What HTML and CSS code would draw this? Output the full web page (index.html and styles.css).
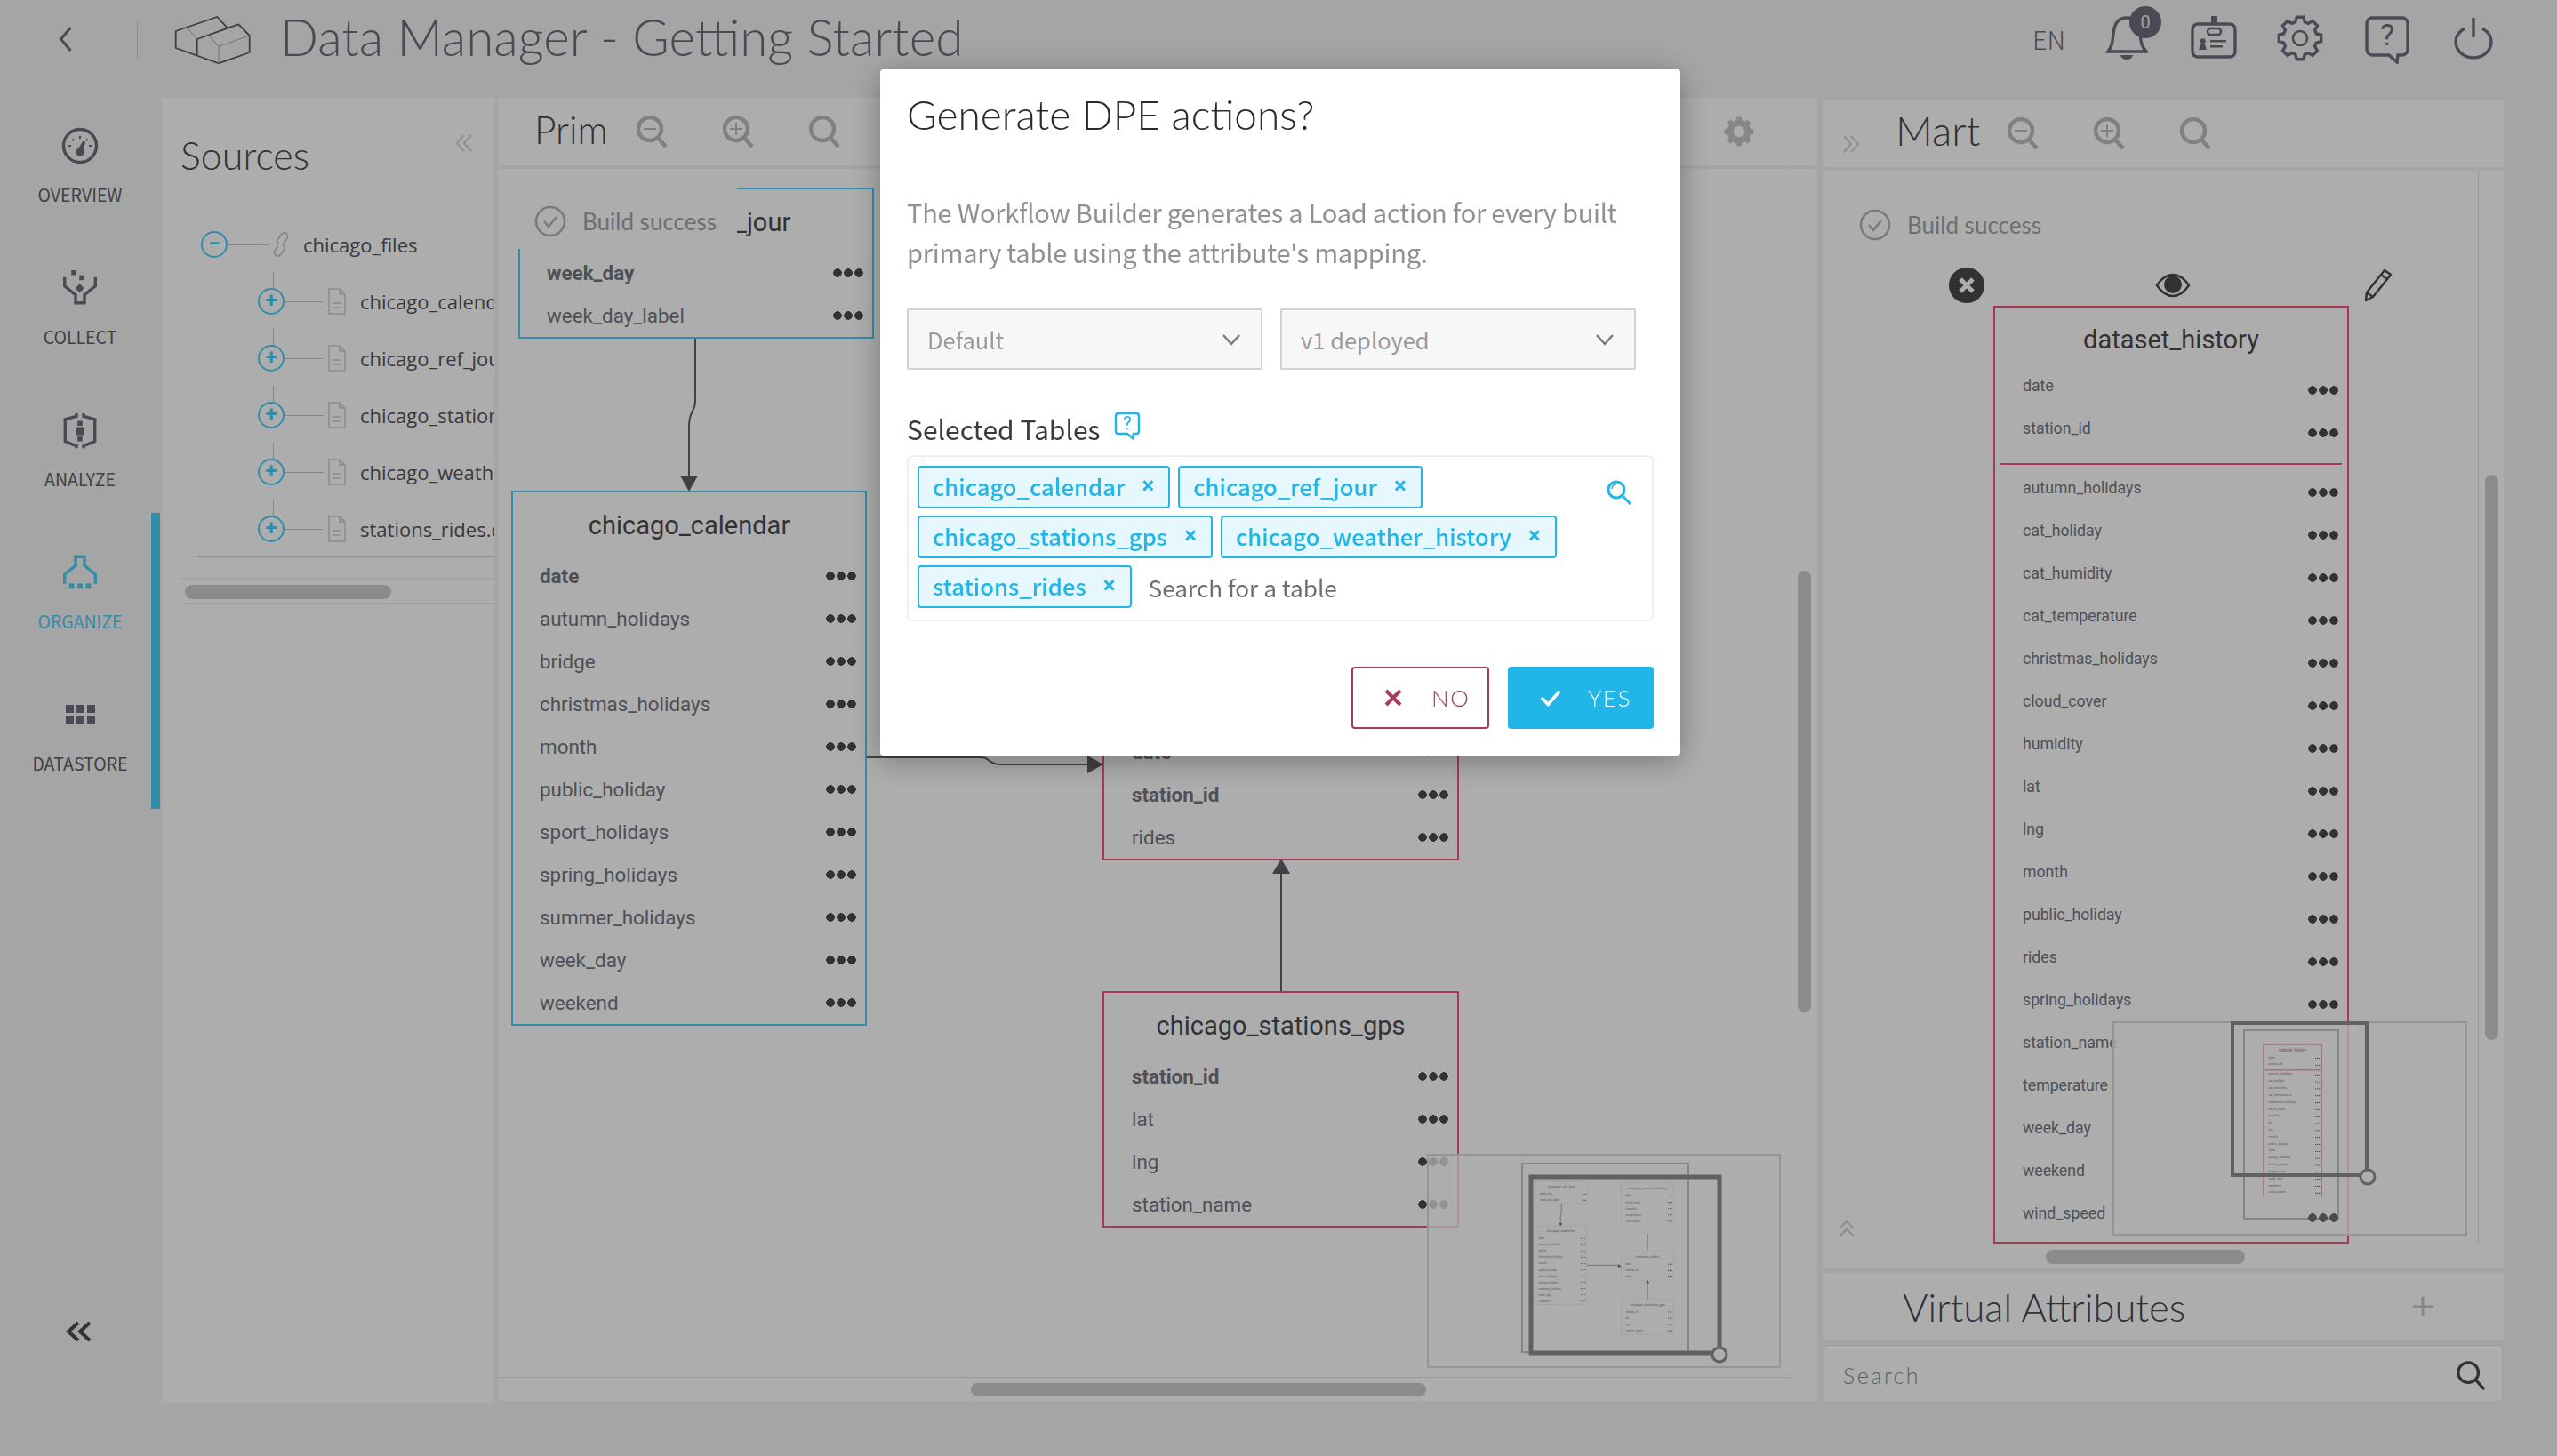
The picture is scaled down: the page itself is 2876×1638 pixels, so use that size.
FILE: index.html
```html
<!DOCTYPE html>
<html lang="en">
<head>
<meta charset="utf-8">
<title>Data Manager - Getting Started</title>
<link rel="stylesheet" href="styles.css">
</head>
<body>
<svg class="defs" width="0" height="0" aria-hidden="true">
  <defs>
    <symbol id="i-gear" viewBox="0 0 52 52"><polygon transform="translate(26 26)" points="18.26,-5.24 23.7,-3.75 23.7,3.75 18.26,5.24 16.62,9.21 19.42,14.11 14.11,19.42 9.21,16.62 5.24,18.26 3.75,23.7 -3.75,23.7 -5.24,18.26 -9.21,16.62 -14.11,19.42 -19.42,14.11 -16.62,9.21 -18.26,5.24 -23.7,3.75 -23.7,-3.75 -18.26,-5.24 -16.62,-9.21 -19.42,-14.11 -14.11,-19.42 -9.21,-16.62 -5.24,-18.26 -3.75,-23.7 3.75,-23.7 5.24,-18.26 9.21,-16.62 14.11,-19.42 19.42,-14.11 16.62,-9.21"/></symbol>
    <symbol id="i-zoom" viewBox="0 0 36 36"><circle cx="15" cy="15" r="13"/><path d="M24 25l9 10"/></symbol>
    <symbol id="i-zoom-out" viewBox="0 0 36 36"><circle cx="15" cy="15" r="13"/><path d="M24 25l9 10"/><path class="thin" d="M8 15h14"/></symbol>
    <symbol id="i-zoom-in" viewBox="0 0 36 36"><circle cx="15" cy="15" r="13"/><path d="M24 25l9 10"/><path class="thin" d="M8 15h14M15 8v14"/></symbol>
    <symbol id="i-check" viewBox="0 0 36 36"><circle cx="18" cy="18" r="16"/><path d="M11 18l5 6 9-11"/></symbol>
    <symbol id="i-file" viewBox="0 0 20 30"><path d="M1 1h12l6 6v22H1zM13 1v6h6M5 17h10M5 22h10"/></symbol>
    <symbol id="m-dots" viewBox="0 0 34 10"><circle cx="5" cy="5" r="4"/><circle cx="17" cy="5" r="4"/><circle cx="29" cy="5" r="4"/></symbol>
  </defs>
</svg>

<div class="app">
  <header class="topbar">
    <svg class="back" viewBox="0 0 16 30"><path d="M14 2L3 15l11 13"/></svg>
    <span class="sep"></span>
    <svg class="logo" viewBox="0 -1 86 54"><path class="logo-thick" d="M1.7 16L48.3 0 60 12.7 72.3 8.3 84.7 21V40L50 52.3 1.7 35zM25.7 43.3V25L60 12.7"/><path class="logo-thin" d="M15 12.7L25.7 25M39 20.7L50 33.3 84.7 21M50 33.3V52.3"/></svg>
    <h1 class="app-title">Data Manager - Getting Started</h1>
    <div class="top-tools">
      <span class="lang">EN</span>
      <span class="bell-wrap">
        <svg class="tool tool-bell" viewBox="0 0 48 50"><path d="M3 40C8 34 8 28 9 20 10 8 15 2 24 2 33 2 38 8 39 20 40 28 40 34 46 40Z"/><path class="solid" d="M17 44h14c-1 4-4 5-7 5s-6-1-7-5z"/></svg>
        <span class="badge">0</span>
      </span>
      <svg class="tool tool-id" viewBox="0 0 52 50"><rect x="2" y="9" width="48" height="37" rx="6"/><rect class="solid" x="23" y="0" width="7" height="10"/><rect class="ring" x="19" y="14" width="15" height="7" rx="3.3"/><circle class="solid" cx="13.7" cy="28.3" r="3"/><path class="solid" d="M9 38l2-6h5l2 6z"/><path class="thin" d="M22 28.3h18M22 34.3h14"/></svg>
      <svg class="tool tool-gear" viewBox="0 0 52 52"><use href="#i-gear"/><circle class="ring" cx="26" cy="26" r="8"/></svg>
      <svg class="tool tool-help" viewBox="0 0 50 54"><path d="M8 2h34c3 0 6 3 6 6v30c0 3-3 6-6 6h-5l-1 8-9-8H8c-3 0-6-3-6-6V8c0-3 3-6 6-6z"/><text class="help-q" x="25" y="33">?</text></svg>
      <svg class="tool tool-power" viewBox="0 0 44 48"><path d="M22 1v22"/><path d="M12 13C5 17 2 23 2 28c0 10 9 18 20 18s20-8 20-18c0-5-3-11-10-15"/></svg>
    </div>
  </header>

  <div class="work">
    <nav class="side-nav">
      <a class="nav-item">
        <svg class="nav-icon" viewBox="0 0 44 44"><circle cx="22" cy="22" r="18.5"/><path class="thin" d="M22 11v3M13.5 14.5l1.7 1.7M30.5 14.5l-1.7 1.7M9 22h3M32 22h3"/><circle class="solid" cx="22" cy="29" r="4.6"/><path class="solid" d="M18.5 27.5L25.5 16.5 28 18 25.5 29z"/></svg>
        <span class="nav-label">OVERVIEW</span>
      </a>
      <a class="nav-item">
        <svg class="nav-icon" viewBox="0 0 44 44"><path d="M4.7 9.7v10L17 29.7v9h10v-9l12.3-10v-10"/><rect class="solid" x="12.2" y="2" width="5.5" height="5.5"/><rect class="solid" x="21.2" y="7.6" width="5.5" height="5.5"/><path class="solid" d="M21.7 17.3l5 5-5 5-5-5z"/></svg>
        <span class="nav-label">COLLECT</span>
      </a>
      <a class="nav-item">
        <svg class="nav-icon" viewBox="0 0 44 44"><path d="M18 3v3.5L5.3 9.7v25L18 39.7v2.6M26 3v3.5l12.7 3.2v25L26 39.7v2.6"/><rect class="solid" x="19.2" y="11.5" width="5.6" height="5.6"/><rect class="solid" x="17.5" y="18.5" width="9" height="9"/><rect class="solid" x="19.2" y="28.9" width="5.6" height="5.6"/></svg>
        <span class="nav-label">ANALYZE</span>
      </a>
      <div class="nav-group">
        <a class="nav-item is-active">
          <svg class="nav-icon" viewBox="0 0 44 44"><path d="M4.7 34.7V24.3L17 14.3V4.3H27V14.3L39.3 24.3V34.7"/><rect class="solid" x="9.8" y="34.4" width="5.8" height="5.8"/><rect class="solid" x="19.1" y="34.4" width="5.8" height="5.8"/><rect class="solid" x="28.4" y="34.4" width="5.8" height="5.8"/></svg>
          <span class="nav-label">ORGANIZE</span>
        </a>
        <a class="nav-item nav-last">
          <svg class="nav-icon" viewBox="0 0 44 44"><g class="solid"><rect x="6" y="11" width="9" height="9"/><rect x="18" y="11" width="9" height="9"/><rect x="30" y="11" width="9" height="9"/><rect x="6" y="23" width="9" height="9"/><rect x="18" y="23" width="9" height="9"/><rect x="30" y="23" width="9" height="9"/></g></svg>
          <span class="nav-label">DATASTORE</span>
        </a>
      </div>
      <svg class="nav-collapse" viewBox="0 0 30 24"><path d="M14 2L3 12l11 10M27 2L16 12l11 10"/></svg>
    </nav>

    <section class="panel sources">
      <div class="sources-head">
        <h2 class="panel-title">Sources</h2>
        <svg class="chev-faint" viewBox="0 0 20 22"><path d="M10 2L2 11l8 9M18 2l-8 9 8 9"/></svg>
      </div>
      <ul class="tree">
        <li class="tree-row tree-root">
          <span class="toggle">&#8722;</span><span class="stem stem-root"></span>
          <svg class="link-icon" viewBox="0 0 24 30"><path d="M9 17l-4 5a4 4 0 0 0 6 5l5-7a4 4 0 0 0-2-5M15 13l4-5a4 4 0 0 0-6-5L8 10a4 4 0 0 0 2 5"/></svg>
          <span class="tree-name">chicago_files</span>
        </li>
        <li class="tree-row tree-child"><span class="toggle">+</span><span class="stem"></span><svg class="file-icon"><use href="#i-file"/></svg><span class="tree-name">chicago_calendar.csv</span></li>
        <li class="tree-row tree-child"><span class="toggle">+</span><span class="stem"></span><svg class="file-icon"><use href="#i-file"/></svg><span class="tree-name">chicago_ref_jour.csv</span></li>
        <li class="tree-row tree-child"><span class="toggle">+</span><span class="stem"></span><svg class="file-icon"><use href="#i-file"/></svg><span class="tree-name">chicago_stations_gps.csv</span></li>
        <li class="tree-row tree-child"><span class="toggle">+</span><span class="stem"></span><svg class="file-icon"><use href="#i-file"/></svg><span class="tree-name">chicago_weather.csv</span></li>
        <li class="tree-row tree-child"><span class="toggle">+</span><span class="stem"></span><svg class="file-icon"><use href="#i-file"/></svg><span class="tree-name">stations_rides.csv</span></li>
      </ul>
      <div class="h-track"><span class="h-thumb"></span></div>
    </section>

    <section class="prim">
      <div class="panel pane-head prim-head">
        <h2 class="panel-title">Prim</h2>
        <div class="zoom-tools">
          <svg class="zoom-icon"><use href="#i-zoom-out"/></svg>
          <svg class="zoom-icon"><use href="#i-zoom-in"/></svg>
          <svg class="zoom-icon"><use href="#i-zoom"/></svg>
        </div>
        <svg class="prim-gear" viewBox="0 0 52 52"><use href="#i-gear"/><circle cx="26" cy="26" r="9"/></svg>
      </div>
      <div class="panel canvas prim-canvas">
        <svg class="links" viewBox="0 0 1484 1386">
          <path d="M222 190V261C222 275 215 270 215 290V345"/>
          <path d="M415 662H545C552 662 552 670 565 670H665"/>
          <path d="M881 925V793"/>
          <polygon points="215,363 205,345 225,345"/>
          <polygon points="681,670 663,660 663,680"/>
          <polygon points="881,776 871,793 891,793"/>
        </svg>

        <article class="tbl blue tbl-ref">
          <h3 class="tbl-title">chicago_ref_jour</h3>
          <div class="row key"><span>week_day</span><i class="dots"></i></div>
          <div class="row"><span>week_day_label</span><i class="dots"></i></div>
        </article>
        <div class="status status-ref">
          <svg class="status-icon"><use href="#i-check"/></svg><span>Build success</span>
        </div>

        <article class="tbl blue tbl-cal">
          <h3 class="tbl-title">chicago_calendar</h3>
          <div class="row key"><span>date</span><i class="dots"></i></div>
          <div class="row"><span>autumn_holidays</span><i class="dots"></i></div>
          <div class="row"><span>bridge</span><i class="dots"></i></div>
          <div class="row"><span>christmas_holidays</span><i class="dots"></i></div>
          <div class="row"><span>month</span><i class="dots"></i></div>
          <div class="row"><span>public_holiday</span><i class="dots"></i></div>
          <div class="row"><span>sport_holidays</span><i class="dots"></i></div>
          <div class="row"><span>spring_holidays</span><i class="dots"></i></div>
          <div class="row"><span>summer_holidays</span><i class="dots"></i></div>
          <div class="row"><span>week_day</span><i class="dots"></i></div>
          <div class="row"><span>weekend</span><i class="dots"></i></div>
        </article>

        <article class="tbl red tbl-rides">
          <h3 class="tbl-title">stations_rides</h3>
          <div class="row key"><span>date</span><i class="dots"></i></div>
          <div class="row key"><span>station_id</span><i class="dots"></i></div>
          <div class="row"><span>rides</span><i class="dots"></i></div>
        </article>

        <article class="tbl red tbl-gps">
          <h3 class="tbl-title">chicago_stations_gps</h3>
          <div class="row key"><span>station_id</span><i class="dots"></i></div>
          <div class="row"><span>lat</span><i class="dots"></i></div>
          <div class="row"><span>lng</span><i class="dots"></i></div>
          <div class="row"><span>station_name</span><i class="dots"></i></div>
        </article>

        <div class="minimap mini-prim">
          <svg viewBox="0 0 398 241" width="398" height="241">
            <rect class="mm-page" x="107" y="11" width="187" height="212"/>
            <g transform="translate(122 31) scale(.147) translate(-583 -211)">
              <g class="mm-blue"><rect x="583" y="211" width="400" height="170"/><rect x="575" y="552" width="400" height="601"/></g>
              <g class="mm-red"><path d="M1240 530V224H1641V530"/><rect x="1240" y="749" width="401" height="218"/><rect x="1240" y="1115" width="401" height="266"/></g>
              <path class="mm-link" d="M782 380V451L775 473V535M975 853H1223M1441 1115V983M1441 610V735"/>
              <path class="mm-arrow" d="M775 553L760 530H790zM1241 860L1215 845V875zM1441 966L1426 990H1456z"/>
              <g class="mm-text">
                <text x="783" y="258" class="c">chicago_ref_jour</text><text x="615" y="315">week_day</text><text x="615" y="362">week_day_label</text>
                <text x="775" y="600" class="c">chicago_calendar</text><text x="607" y="655">date</text><text x="607" y="703">autumn_holidays</text><text x="607" y="751">bridge</text><text x="607" y="799">christmas_holidays</text><text x="607" y="847">month</text><text x="607" y="895">public_holiday</text><text x="607" y="943">sport_holidays</text><text x="607" y="991">spring_holidays</text><text x="607" y="1039">summer_holidays</text><text x="607" y="1087">week_day</text><text x="607" y="1135">weekend</text>
                <text x="1441" y="272" class="c">chicago_weather_history</text><text x="1273" y="330">date</text><text x="1273" y="378">cloud_cover</text><text x="1273" y="426">humidity</text><text x="1273" y="474">temperature</text><text x="1273" y="522">wind_speed</text>
                <text x="1441" y="798" class="c">stations_rides</text><text x="1273" y="853">date</text><text x="1273" y="901">station_id</text><text x="1273" y="949">rides</text>
                <text x="1441" y="1163" class="c">chicago_stations_gps</text><text x="1273" y="1218">station_id</text><text x="1273" y="1266">lat</text><text x="1273" y="1314">lng</text><text x="1273" y="1362">station_name</text>
              </g>
              <g class="mm-dots">
                <use href="#m-dots" x="939" y="303" width="34" height="10"/><use href="#m-dots" x="939" y="350" width="34" height="10"/>
                <use href="#m-dots" x="930" y="643" width="34" height="10"/><use href="#m-dots" x="930" y="691" width="34" height="10"/><use href="#m-dots" x="930" y="739" width="34" height="10"/><use href="#m-dots" x="930" y="787" width="34" height="10"/><use href="#m-dots" x="930" y="835" width="34" height="10"/><use href="#m-dots" x="930" y="883" width="34" height="10"/><use href="#m-dots" x="930" y="931" width="34" height="10"/><use href="#m-dots" x="930" y="979" width="34" height="10"/><use href="#m-dots" x="930" y="1027" width="34" height="10"/><use href="#m-dots" x="930" y="1075" width="34" height="10"/><use href="#m-dots" x="930" y="1123" width="34" height="10"/>
                <use href="#m-dots" x="1596" y="319" width="34" height="10"/><use href="#m-dots" x="1596" y="367" width="34" height="10"/><use href="#m-dots" x="1596" y="415" width="34" height="10"/><use href="#m-dots" x="1596" y="463" width="34" height="10"/><use href="#m-dots" x="1596" y="511" width="34" height="10"/>
                <use href="#m-dots" x="1596" y="840" width="34" height="10"/><use href="#m-dots" x="1596" y="889" width="34" height="10"/><use href="#m-dots" x="1596" y="937" width="34" height="10"/>
                <use href="#m-dots" x="1596" y="1206" width="34" height="10"/><use href="#m-dots" x="1596" y="1254" width="34" height="10"/><use href="#m-dots" x="1596" y="1302" width="34" height="10"/><use href="#m-dots" x="1596" y="1350" width="34" height="10"/>
              </g>
            </g>
            <rect class="mm-view" x="117" y="26" width="212" height="198"/>
            <circle class="mm-handle" cx="329" cy="226" r="8"/>
          </svg>
        </div>

        <span class="v-rail prim-rail"></span>
        <span class="v-thumb prim-vthumb"></span>
        <span class="b-rail prim-brail"></span>
        <span class="b-thumb prim-bthumb"></span>
      </div>
    </section>

    <section class="mart">
      <div class="panel pane-head mart-head">
        <svg class="chev-faint chev-right" viewBox="0 0 20 22"><path d="M2 2l8 9-8 9M10 2l8 9-8 9"/></svg>
        <h2 class="panel-title">Mart</h2>
        <div class="zoom-tools">
          <svg class="zoom-icon"><use href="#i-zoom-out"/></svg>
          <svg class="zoom-icon"><use href="#i-zoom-in"/></svg>
          <svg class="zoom-icon"><use href="#i-zoom"/></svg>
        </div>
      </div>
      <div class="panel canvas mart-canvas">
        <div class="status status-mart">
          <svg class="status-icon"><use href="#i-check"/></svg><span>Build success</span>
        </div>
        <div class="tbl-tools">
          <svg class="tt-close" viewBox="0 0 40 40"><circle cx="20" cy="20" r="20"/><path d="M13 13l14 14M27 13L13 27"/></svg>
          <svg class="tt-eye" viewBox="0 0 40 28"><path class="eye-outline" d="M2 14C8 5 14 2 20 2s12 3 18 12c-6 9-12 12-18 12S8 23 2 14z"/><circle cx="20" cy="13" r="10"/></svg>
          <svg class="tt-pen" viewBox="0 0 34 40"><path d="M24 3l7 5L11 33l-8 4 1-9zM20 8l7 5M4 28l7 5"/></svg>
        </div>
        <article class="tbl red small tbl-history">
          <h3 class="tbl-title">dataset_history</h3>
          <div class="row"><span>date</span><i class="dots"></i></div>
          <div class="row"><span>station_id</span><i class="dots"></i></div>
          <hr class="tbl-rule">
          <div class="row"><span>autumn_holidays</span><i class="dots"></i></div>
          <div class="row"><span>cat_holiday</span><i class="dots"></i></div>
          <div class="row"><span>cat_humidity</span><i class="dots"></i></div>
          <div class="row"><span>cat_temperature</span><i class="dots"></i></div>
          <div class="row"><span>christmas_holidays</span><i class="dots"></i></div>
          <div class="row"><span>cloud_cover</span><i class="dots"></i></div>
          <div class="row"><span>humidity</span><i class="dots"></i></div>
          <div class="row"><span>lat</span><i class="dots"></i></div>
          <div class="row"><span>lng</span><i class="dots"></i></div>
          <div class="row"><span>month</span><i class="dots"></i></div>
          <div class="row"><span>public_holiday</span><i class="dots"></i></div>
          <div class="row"><span>rides</span><i class="dots"></i></div>
          <div class="row"><span>spring_holidays</span><i class="dots"></i></div>
          <div class="row"><span>station_name</span><i class="dots"></i></div>
          <div class="row"><span>temperature</span><i class="dots"></i></div>
          <div class="row"><span>week_day</span><i class="dots"></i></div>
          <div class="row"><span>weekend</span><i class="dots"></i></div>
          <div class="row"><span>wind_speed</span><i class="dots dots-top"></i></div>
        </article>

        <div class="minimap mini-mart">
          <svg viewBox="0 0 399 241" width="399" height="241">
            <rect class="mm-page" x="148" y="10" width="106" height="212"/>
            <g transform="translate(170 26) scale(.163)">
              <path class="mm-red" d="M0 1054V0H400V1054M8 177H392"/>
              <g class="mm-text">
                <text x="200" y="48" class="c">dataset_history</text><text x="33" y="96">date</text><text x="33" y="144">station_id</text><text x="33" y="211">autumn_holidays</text><text x="33" y="259">cat_holiday</text><text x="33" y="307">cat_humidity</text><text x="33" y="355">cat_temperature</text><text x="33" y="403">christmas_holidays</text><text x="33" y="451">cloud_cover</text><text x="33" y="499">humidity</text><text x="33" y="547">lat</text><text x="33" y="595">lng</text><text x="33" y="643">month</text><text x="33" y="691">public_holiday</text><text x="33" y="739">rides</text><text x="33" y="787">spring_holidays</text><text x="33" y="835">station_name</text><text x="33" y="883">temperature</text><text x="33" y="931">week_day</text><text x="33" y="979">weekend</text><text x="33" y="1027">wind_speed</text>
              </g>
              <g class="mm-dots">
                <use href="#m-dots" x="355" y="90" width="34" height="10"/><use href="#m-dots" x="355" y="138" width="34" height="10"/><use href="#m-dots" x="355" y="205" width="34" height="10"/><use href="#m-dots" x="355" y="253" width="34" height="10"/><use href="#m-dots" x="355" y="301" width="34" height="10"/><use href="#m-dots" x="355" y="349" width="34" height="10"/><use href="#m-dots" x="355" y="397" width="34" height="10"/><use href="#m-dots" x="355" y="445" width="34" height="10"/><use href="#m-dots" x="355" y="493" width="34" height="10"/><use href="#m-dots" x="355" y="541" width="34" height="10"/><use href="#m-dots" x="355" y="589" width="34" height="10"/><use href="#m-dots" x="355" y="637" width="34" height="10"/><use href="#m-dots" x="355" y="685" width="34" height="10"/><use href="#m-dots" x="355" y="733" width="34" height="10"/><use href="#m-dots" x="355" y="781" width="34" height="10"/><use href="#m-dots" x="355" y="829" width="34" height="10"/><use href="#m-dots" x="355" y="877" width="34" height="10"/><use href="#m-dots" x="355" y="925" width="34" height="10"/><use href="#m-dots" x="355" y="973" width="34" height="10"/><use href="#m-dots" x="355" y="1021" width="34" height="10"/>
              </g>
            </g>
            <rect class="mm-view thin-view" x="135" y="2" width="151" height="171"/>
            <circle class="mm-handle" cx="287" cy="175" r="8"/>
          </svg>
        </div>

        <svg class="chev-up" viewBox="0 0 20 22"><path d="M2 10l8-8 8 8M2 19l8-8 8 8"/></svg>
        <span class="v-rail mart-rail"></span>
        <span class="v-thumb mart-vthumb"></span>
        <span class="b-rail mart-brail"></span>
        <span class="b-thumb mart-bthumb"></span>
      </div>
      <div class="panel virtual">
        <h2 class="panel-title">Virtual Attributes</h2>
        <svg class="plus" viewBox="0 0 22 22"><path d="M11 0v22M0 11h22"/></svg>
      </div>
      <div class="panel vsearch">
        <span class="vsearch-text">Search</span>
        <svg class="vsearch-icon" viewBox="0 0 36 36"><circle cx="15" cy="15" r="12"/><path d="M24 24l10 11"/></svg>
      </div>
    </section>
  </div>
</div>

<div class="scrim"></div>

<div class="modal" role="dialog">
  <h2 class="modal-title">Generate DPE actions?</h2>
  <p class="modal-text">The Workflow Builder generates a Load action for every built primary table using the attribute's mapping.</p>
  <div class="selects">
    <div class="select"><span>Default</span><svg viewBox="0 0 22 14"><path d="M2 2l9 10 9-10"/></svg></div>
    <div class="select"><span>v1 deployed</span><svg viewBox="0 0 22 14"><path d="M2 2l9 10 9-10"/></svg></div>
  </div>
  <div class="field-label">
    <span>Selected Tables</span>
    <svg viewBox="0 0 30 32"><path d="M5 2h20c2 0 3 1 3 3v17c0 2-1 3-3 3h-3l-1 5-6-5H5c-2 0-3-1-3-3V5c0-2 1-3 3-3z"/><text class="hint-q" x="15" y="20">?</text></svg>
  </div>
  <div class="tagbox">
    <span class="tag"><span>chicago_calendar</span><b class="tag-x">&#215;</b></span>
    <span class="tag"><span>chicago_ref_jour</span><b class="tag-x">&#215;</b></span>
    <span class="tag"><span>chicago_stations_gps</span><b class="tag-x">&#215;</b></span>
    <span class="tag"><span>chicago_weather_history</span><b class="tag-x">&#215;</b></span>
    <span class="tag"><span>stations_rides</span><b class="tag-x">&#215;</b></span>
    <span class="tag-input">Search for a table</span>
    <svg class="tag-search" viewBox="0 0 28 28"><circle cx="11" cy="11" r="9"/><path d="M18 18l9 9"/><path class="gl" d="M6 10c0-3 2-5 5-5"/></svg>
  </div>
  <div class="actions">
    <button class="btn btn-no"><svg viewBox="0 0 20 20"><path d="M2 2l16 16M18 2L2 18"/></svg><span>NO</span></button>
    <button class="btn btn-yes"><svg viewBox="0 0 26 20"><path d="M2 10l8 8L24 2"/></svg><span>YES</span></button>
  </div>
</div>
</body>
</html>
```

FILE: styles.css
```css
* { box-sizing: border-box; }
html, body { margin: 0; height: 100%; }
body { background: #f4f4f4; font-family: "Roboto", sans-serif; color: #4a4a50; overflow: hidden; }
h1, h2, h3, p, ul { margin: 0; padding: 0; font-weight: 400; }
ul { list-style: none; }
.defs { position: absolute; }
svg { display: block; fill: none; }

.app { width: 2876px; height: 1638px; display: flex; flex-direction: column; }

/* top bar */
.topbar { height: 110px; display: flex; align-items: center; padding-left: 65px; padding-right: 72px; flex: none; }
.back { width: 17px; height: 30px; stroke: #6d6e7d; stroke-width: 3; margin-top: -22px; }
.sep { width: 1px; height: 40px; background: #cfcfcf; margin-left: 72px; margin-top: -20px; }
.logo { width: 86px; height: 54px; margin-left: 41px; margin-top: -20px; stroke-linejoin: round; }
.logo-thick { stroke: #5d5d62; stroke-width: 1.8; }
.logo-thin { stroke: #a8a8a8; stroke-width: 1; }
.app-title { font-family: "Lato", sans-serif; font-weight: 300; font-size: 56.6px; line-height: 70px; color: #6d6e7d; margin-left: 33px; margin-top: -28px; white-space: nowrap; }
.top-tools { margin-left: auto; display: flex; align-items: center; margin-top: -24px; }
.lang { font-family: "Noto Sans CJK JP", sans-serif; font-weight: 300; font-size: 29px; color: #6d6e7d; width: 80px; }
.bell-wrap { position: relative; width: 48px; height: 50px; margin-right: 50px; margin-left: 0; }
.tool { stroke: #6d6e7d; stroke-width: 3.4; color: #6d6e7d; }
.tool .solid, .nav-icon .solid { fill: currentColor; stroke: none; }
.tool .thin { stroke-width: 2.4; }
.tool .ring { stroke-width: 2.6; }
.tool-bell { width: 48px; height: 50px; margin-left: 2px; }
.badge { position: absolute; left: 29px; top: -11px; width: 36px; height: 36px; border-radius: 50%; background: #6d6e7d; color: #f0f0f0; font-size: 20px; line-height: 36px; text-align: center; font-family: "Roboto", sans-serif; }
.tool-id { width: 52px; height: 50px; }
.tool-gear { width: 52px; height: 52px; margin-left: 45px; }
.tool-help { width: 50px; height: 54px; margin-left: 47px; margin-top: 4px; }
.help-q { font-family: "Roboto", sans-serif; font-size: 34px; fill: #6d6e7d; stroke: none; text-anchor: middle; }
.tool-power { width: 44px; height: 48px; margin-left: 50px; }

/* layout */
.work { flex: none; height: 1468px; display: flex; align-items: stretch; }
.panel { background: #fff; }
.panel-title { font-family: "Lato", sans-serif; font-weight: 300; color: #4a4a50; white-space: nowrap; }

/* side nav */
.side-nav { width: 182px; flex: none; display: flex; flex-direction: column; padding: 32px 2px 68px 0; }
.nav-item { height: 160px; display: flex; flex-direction: column; align-items: center; color: #6d6e7d; flex: none; }
.nav-icon { width: 44px; height: 44px; stroke: currentColor; stroke-width: 3.4; }
.nav-icon .thin { stroke-width: 2; }
.nav-label { font-family: "Noto Sans CJK JP", sans-serif; font-size: 19.5px; line-height: 26px; margin-top: 20px; color: #5f5f66; }
.nav-group { margin-top: -45px; padding-top: 45px; height: 333px; width: 180px; border-right: 10px solid #4ccff8; flex: none; }
.nav-group .nav-item { width: 180px; }
.nav-last { height: 128px; }
.is-active { color: #4ccff8; }
.is-active .nav-label { color: #4ccff8; }
.nav-collapse { width: 30px; height: 24px; margin: auto 0 0 74px; stroke: #4a4a50; stroke-width: 4; }

/* sources */
.sources { width: 374px; flex: none; margin-right: 4px; overflow: hidden; display: flex; flex-direction: column; }
.sources-head { height: 126px; display: flex; align-items: center; padding-left: 21px; padding-right: 24px; justify-content: space-between; }
.sources-head .panel-title { font-size: 43px; margin-top: 2px; }
.chev-faint { width: 20px; height: 22px; stroke: #d3d3d3; stroke-width: 2; margin-top: -24px; }
.tree { margin-top: 7px; }
.tree-row { height: 64px; display: flex; align-items: center; white-space: nowrap; position: relative; }
.tree-root { padding-left: 44px; }
.tree-child { padding-left: 108px; }
.tree-child::before { content: ""; position: absolute; left: 125px; top: -1px; height: 18px; width: 1px; background: #c4c4c4; }
.toggle { width: 30px; height: 30px; border-radius: 50%; border: 2px solid #4ccff8; color: #4ccff8; font: 700 24px/24px "Roboto", sans-serif; text-align: center; flex: none; }
.stem { width: 43px; height: 1px; background: #c4c4c4; flex: none; }
.stem-root { width: 46px; }
.link-icon { width: 24px; height: 30px; stroke: #cacaca; stroke-width: 2; margin-left: 2px; margin-right: 13px; flex: none; }
.file-icon { width: 20px; height: 30px; stroke: #d0d0d0; stroke-width: 1.5; margin-left: 6px; margin-right: 16px; flex: none; }
.tree-name { font-family: "Open Sans", sans-serif; font-size: 22px; color: #55555c; }
.h-track { height: 29px; margin: 23px 0 0 20px; border-top: 1px solid #ececec; border-bottom: 1px solid #ececec; padding: 7px 0 0 6px; }
.h-thumb { display: block; width: 232px; height: 16px; border-radius: 8px; background: #cdcdcd; }
.tree-row:last-child::after { content: ""; position: absolute; left: 40px; right: 0; bottom: 0; height: 2px; background: #cfcfcf; }

/* prim */
.prim { width: 1484px; flex: none; margin-right: 6px; display: flex; flex-direction: column; }
.pane-head { height: 76px; flex: none; display: flex; align-items: center; }
.pane-head .panel-title { font-size: 46px; margin-top: -7px; }
.prim-head { padding-left: 41px; position: relative; }
.prim-head .panel-title { font-size: 42.5px; margin-top: -6px; }
.zoom-tools { display: flex; gap: 61px; }
.prim-head .zoom-tools { margin-left: 32px; }
.zoom-icon { width: 36px; height: 36px; stroke: #bdbdbd; stroke-width: 4.5; }
.thin { stroke-width: 2; }
.prim-gear { width: 36px; height: 36px; margin-left: auto; margin-right: 70px; }
.prim-gear use { fill: #c8c8c8; }
.prim-gear circle { fill: #fff; }
.canvas { position: relative; overflow: hidden; }
.prim-canvas { margin-top: 4px; height: 1386px; flex: none; }

.links { position: absolute; left: 0; top: 0; width: 1484px; height: 1386px; }
.links path { stroke: #5f5f68; stroke-width: 2; fill: none; }
.links polygon { fill: #5f5f68; }

/* tables on the diagram */
.tbl { position: absolute; width: 400px; border: 2px solid; background: #fff; }
.tbl.blue { border-color: #4ccff8; }
.tbl.red { border-color: #f7557d; }
.tbl-title { height: 70px; padding-top: 4px; display: flex; align-items: center; justify-content: center; font: 400 29px "Roboto", sans-serif; color: #4a4a50; }
.row { height: 48px; display: flex; align-items: center; justify-content: space-between; padding: 0 10px 0 30px; font: 400 22.4px "Roboto", sans-serif; color: #74767f; }
.row.key { font-weight: 700; }
.tbl.red .row { padding-left: 31px; }
.dots { width: 34px; height: 10px; background: radial-gradient(circle at 5px 5px, #4b4b4b 4.5px, transparent 5px) 0 0 / 12px 10px repeat-x; flex: none; }

.tbl-ref { left: 23px; top: 21px; height: 170px; }
.tbl-cal { left: 15px; top: 362px; }
.tbl-rides { left: 680px; top: 560px; width: 401px; }
.tbl-gps { left: 680px; top: 925px; width: 401px; }
.tbl-ref .row { padding-left: 30px; }

.status { display: flex; align-items: center; font-family: "Lato", sans-serif; font-size: 26px; color: #a4a4a4; }
.status-icon { width: 36px; height: 36px; stroke: #b4b4b4; stroke-width: 2.5; flex: none; margin-right: 18px; }
.status-ref { position: absolute; left: 21px; top: 20px; width: 248px; height: 70px; background: #fff; padding: 8px 0 0 20px; }
.status-mart { padding: 43px 0 0 41px; }

/* minimap */
.minimap { position: absolute; background: rgba(255,255,255,.78); border: 2px solid #dcdcdc; }
.minimap svg { margin: -2px; }
.mini-prim { left: 1045px; top: 1108px; width: 398px; height: 241px; }
.mini-mart { left: 326px; top: 957px; width: 399px; height: 241px; }
.mm-page { fill: #fff; stroke: #c4c4c4; stroke-width: 2; }
.mm-blue rect, .mm-red path, .mm-red rect { fill: none; stroke: #e2e2e2; stroke-width: 5; stroke-dasharray: 8 5; }
.mini-mart .mm-red { stroke: #f7557d; stroke-width: 5; fill: none; }
.mm-link { stroke: #8a8a8a; stroke-width: 5; fill: none; }
.mm-arrow { fill: #777; }
.mm-text text { font: 400 22px "Roboto", sans-serif; fill: #8a8a90; }
.mm-text .c { font-size: 28px; text-anchor: middle; }
.mm-dots { fill: #555; }
.mm-view { fill: none; stroke: #8f8f8f; stroke-width: 5; }
.thin-view { stroke-width: 4; }
.mm-handle { fill: #fff; stroke: #8f8f8f; stroke-width: 3; }

/* scrollbars */
.v-rail { position: absolute; width: 1px; top: 0; background: #e2e2e2; }
.v-thumb { position: absolute; width: 15px; background: #cdcdcd; border-radius: 8px; }
.b-rail { position: absolute; height: 1px; left: 0; background: #e2e2e2; }
.b-thumb { position: absolute; height: 15px; background: #cdcdcd; border-radius: 8px; }
.prim-rail { left: 1455px; bottom: 0; }
.prim-vthumb { left: 1462px; top: 452px; height: 497px; }
.prim-brail { top: 1359px; width: 1455px; }
.prim-bthumb { left: 532px; top: 1366px; width: 512px; }

/* mart */
.mart { width: 766px; flex: none; display: flex; flex-direction: column; margin-top: 2px; }
.mart-head { padding-left: 22px; }
.chev-right { margin: 24px 0 0 0; }
.mart-head .panel-title { margin-left: 40px; }
.mart-head .zoom-tools { margin-left: 31px; }
.mart-canvas { margin-top: 4px; height: 1235px; flex: none; }
.tbl-tools { display: flex; justify-content: space-between; align-items: center; position: absolute; left: 142px; top: 109px; width: 500px; }
.tt-close { width: 40px; height: 40px; }
.tt-close circle { fill: #4a4a4a; }
.tt-close path { stroke: #fff; stroke-width: 5; }
.tt-eye { width: 40px; height: 28px; margin-left: -3px; }
.tt-eye .eye-outline { fill: #fff; stroke: #4a4a4a; stroke-width: 2.5; }
.tt-eye circle { fill: #4a4a4a; }
.tt-pen { width: 34px; height: 40px; stroke: #4a4a4a; stroke-width: 2.5; stroke-linejoin: round; }
.tbl-history { left: 192px; top: 152px; padding-bottom: 8px; }
.small .tbl-title { height: 64px; padding-top: 8px; }
.small .row { font-size: 17.7px; }
.small .row .dots { margin-top: 10px; }
.tbl-rule { margin: 15px 6px 2px; border: 0; height: 2px; background: #f7557d; width: auto; }
.dots-top { position: relative; z-index: 5; }
.chev-up { position: absolute; left: 17px; top: 1180px; width: 20px; height: 22px; stroke: #d3d3d3; stroke-width: 2; }
.mart-rail { left: 737px; height: 1207px; }
.mart-vthumb { left: 745px; top: 342px; height: 636px; }
.mart-brail { top: 1207px; width: 737px; }
.mart-bthumb { left: 251px; top: 1214px; width: 224px; height: 16px; }
.virtual { margin-top: 5px; height: 75px; flex: none; display: flex; align-items: center; justify-content: space-between; padding: 0 80px 0 90px; width: 766px; }
.virtual .panel-title { font-size: 43.5px; }
.plus { width: 22px; height: 22px; stroke: #c8c8c8; stroke-width: 3; }
.vsearch { margin-top: 6px; height: 63px; flex: none; display: flex; align-items: center; justify-content: space-between; padding: 4px 18px 0 21px; width: 764px; margin-left: 1px; border: 1px solid #e2e2e2; border-bottom: 0; border-radius: 4px 4px 0 0; }
.vsearch-text { font-family: "Lato", sans-serif; font-weight: 300; font-size: 25px; letter-spacing: 2.5px; color: #8d8d8d; }
.vsearch-icon { width: 34px; height: 34px; stroke: #4a4a4a; stroke-width: 3.4; }

/* scrim and modal */
.scrim { position: fixed; inset: 0; background: rgba(0,0,0,.32); }
.modal { position: fixed; left: 990px; top: 78px; width: 900px; height: 772px; background: #fff; border-radius: 4px; padding: 30px 30px; box-shadow: 0 6px 34px rgba(0,0,0,.32); }
.modal-title { font-family: "Lato", sans-serif; font-weight: 300; font-size: 46px; line-height: 42px; color: #2a2a2a; white-space: nowrap; }
.modal-text { font-family: "Noto Sans CJK JP", sans-serif; font-size: 29px; letter-spacing: -.22px; line-height: 45px; color: #919191; margin-top: 66px; margin-bottom: 41px; width: 840px; }
.selects { display: flex; gap: 20px; }
.select { width: 400px; height: 69px; background: #f7f7f7; border: 2px solid #d2d2d2; border-radius: 2px; display: flex; align-items: center; justify-content: space-between; padding: 0 22px 0 21px; font: 400 25.5px "Noto Sans CJK JP", sans-serif; color: #9a9a9a; }
.select svg { width: 22px; height: 14px; stroke: #7a7a7a; stroke-width: 2.5; }
.field-label { display: flex; align-items: center; gap: 15px; height: 40px; margin-top: 46px; font: 400 30px "Noto Sans CJK JP", sans-serif; color: #3a3a3a; }
.field-label svg { width: 30px; height: 32px; stroke: #22b5e8; stroke-width: 2.5; margin-top: -6px; }
.hint-q { font: 400 20px "Roboto", sans-serif; fill: #22b5e8; stroke: none; text-anchor: middle; }
.tagbox { position: relative; margin-top: 10px; width: 840px; height: 187px; border: 2px solid #efefef; border-radius: 6px; padding: 10px 60px 0 10px; display: flex; flex-wrap: wrap; gap: 8px 9px; align-content: flex-start; align-items: center; }
.tag { height: 48px; display: inline-flex; align-items: center; padding: 0 16px 4px 15px; background: #e6f7fd; border: 2px solid #22b5e8; border-radius: 4px; font: 500 25.7px "Noto Sans CJK JP", sans-serif; color: #22b5e8; white-space: nowrap; }
.tag-x { font: 700 26px "Roboto", sans-serif; margin-left: 19px; }
.tag-input { font: 400 26.2px "Noto Sans CJK JP", sans-serif; color: #6f6f6f; margin-left: 10px; margin-top: 2px; }
.tag-search { position: absolute; right: 23px; top: 26px; width: 28px; height: 28px; stroke: #22b5e8; stroke-width: 3; }
.tag-search .gl { stroke-width: 1.5; }
.actions { display: flex; justify-content: flex-end; gap: 21px; margin-top: 51px; }
.btn { height: 70px; display: flex; align-items: center; border-radius: 4px; font: 300 26px "Lato", sans-serif; letter-spacing: 1.6px; padding: 0; cursor: pointer; }
.btn svg { flex: none; fill: none; }
.btn-no { width: 155px; background: #fff; border: 2px solid #a33a57; color: #a33a57; padding-left: 35px; gap: 33px; }
.btn-no svg { width: 20px; height: 20px; stroke: #a33a57; stroke-width: 4; }
.btn-yes { width: 164px; background: #22b5e8; border: 0; color: #fff; padding-left: 36px; gap: 30px; }
.btn-yes svg { width: 24px; height: 20px; stroke: #fff; stroke-width: 4; }
```
